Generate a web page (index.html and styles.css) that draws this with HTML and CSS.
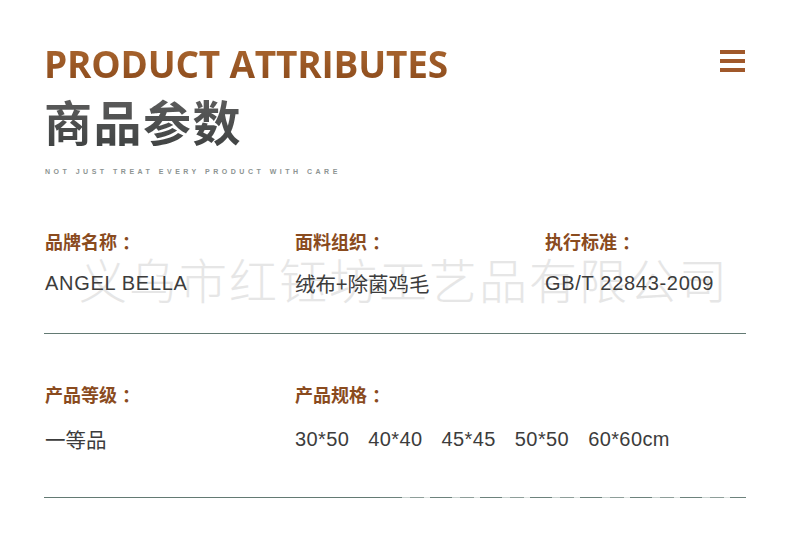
FILE: index.html
```html
<!DOCTYPE html>
<html lang="zh-CN">
<head>
<meta charset="utf-8">
<title>商品参数</title>
<link rel="stylesheet" href="styles.css">
</head>
<body>
<div class="page">
  <header class="head">
    <div class="titles">
      <h1 class="en">PRODUCT ATTRIBUTES</h1>
      <h2 class="cn">商品参数</h2>
      <p class="tag">NOT JUST TREAT EVERY PRODUCT WITH CARE</p>
    </div>
    <div class="menu"><span></span><span></span><span></span></div>
  </header>

  <section class="row row-first">
    <div class="cell">
      <div class="label">品牌名称<span class="colon">：</span></div>
      <div class="value">ANGEL BELLA</div>
    </div>
    <div class="cell">
      <div class="label">面料组织<span class="colon">：</span></div>
      <div class="value cjk">绒布+除菌鸡毛</div>
    </div>
    <div class="cell">
      <div class="label">执行标准<span class="colon">：</span></div>
      <div class="value">GB/T 22843-2009</div>
    </div>
    <div class="watermark">义乌市红钰坊工艺品有限公司</div>
  </section>

  <section class="row row-second">
    <div class="cell">
      <div class="label">产品等级<span class="colon">：</span></div>
      <div class="value cjk">一等品</div>
    </div>
    <div class="cell">
      <div class="label">产品规格<span class="colon">：</span></div>
      <div class="value sizes"><span>30*50</span><span>40*40</span><span>45*45</span><span>50*50</span><span>60*60cm</span></div>
    </div>
  </section>
  <div class="rule"><span class="solid"></span><span class="dashed"></span></div>
</div>
</body>
</html>
```

FILE: styles.css
```css
html, body {
  margin: 0;
  padding: 0;
  background: #ffffff;
}

.page {
  width: 790px;
  height: 542px;
  box-sizing: border-box;
  padding: 44px 44px 0 44px;
  font-family: "Liberation Sans", Arial, "Noto Sans CJK SC", sans-serif;
}

.head {
  display: flex;
  justify-content: space-between;
  align-items: flex-start;
}

.en {
  margin: 0;
  font-family: "Open Sans", "Liberation Sans", sans-serif;
  font-weight: 700;
  font-size: 37px;
  line-height: 40px;
  letter-spacing: -0.2px;
  background: linear-gradient(180deg, #ab6730 0%, #8b4a1b 100%);
  -webkit-background-clip: text;
  background-clip: text;
  color: transparent;
}

.cn {
  margin: 10px 0 0 0;
  font-family: "Noto Sans CJK SC", sans-serif;
  font-weight: 700;
  font-size: 48px;
  line-height: 52px;
  letter-spacing: 1.5px;
  background: linear-gradient(180deg, #5e5e5e 0%, #414444 100%);
  -webkit-background-clip: text;
  background-clip: text;
  color: transparent;
}

.tag {
  margin: 22px 0 0 1px;
  font-family: "Liberation Sans", Arial, sans-serif;
  font-weight: 700;
  font-size: 7px;
  line-height: 8px;
  letter-spacing: 3.5px;
  color: #8d9492;
}

.menu {
  display: flex;
  flex-direction: column;
  gap: 5px;
  margin: 6px 1px 0 0;
}

.menu span {
  display: block;
  width: 25px;
  height: 4px;
  background: #a0582a;
}

.row {
  position: relative;
  display: grid;
  grid-template-columns: 250px 250px 201px;
}

.row-first {
  margin-top: 53px;
  padding: 0 0 38px 1px;
  border-bottom: 1px solid #637a73;
}

.row-second {
  margin-top: 48px;
  padding: 0 0 46px 1px;
  grid-template-columns: 250px 451px;
}

.cell {
  position: relative;
  z-index: 1;
}

.label {
  font-family: "Noto Sans CJK SC", sans-serif;
  font-weight: 700;
  font-size: 18px;
  line-height: 24px;
  color: #8a4b1e;
}

.label .colon {
  margin-left: 5px;
}

.value {
  margin-top: 18px;
  font-size: 20px;
  line-height: 24px;
  letter-spacing: 0.7px;
  color: #3c3c3c;
}

.row-second .value {
  margin-top: 21px;
}

.value.cjk {
  font-family: "Noto Sans CJK SC", sans-serif;
  font-size: 20.5px;
  letter-spacing: 0;
}

.sizes {
  display: flex;
  gap: 19px;
  letter-spacing: 0.4px;
}

.watermark {
  position: absolute;
  left: 35px;
  top: 23px;
  z-index: 0;
  font-family: "Noto Sans CJK SC", sans-serif;
  font-weight: 300;
  font-size: 48px;
  line-height: 52px;
  letter-spacing: 2px;
  color: #e6e6e6;
  white-space: nowrap;
}

.rule {
  display: flex;
  height: 1px;
}

.rule .solid {
  width: 336px;
  background: #637a73;
}

.rule .dashed {
  flex: 1;
  background: repeating-linear-gradient(90deg, #6d827c 0 22px, #c9d3d0 22px 30px, #8e9e99 30px 44px, #dfe5e3 44px 50px);
}
```
